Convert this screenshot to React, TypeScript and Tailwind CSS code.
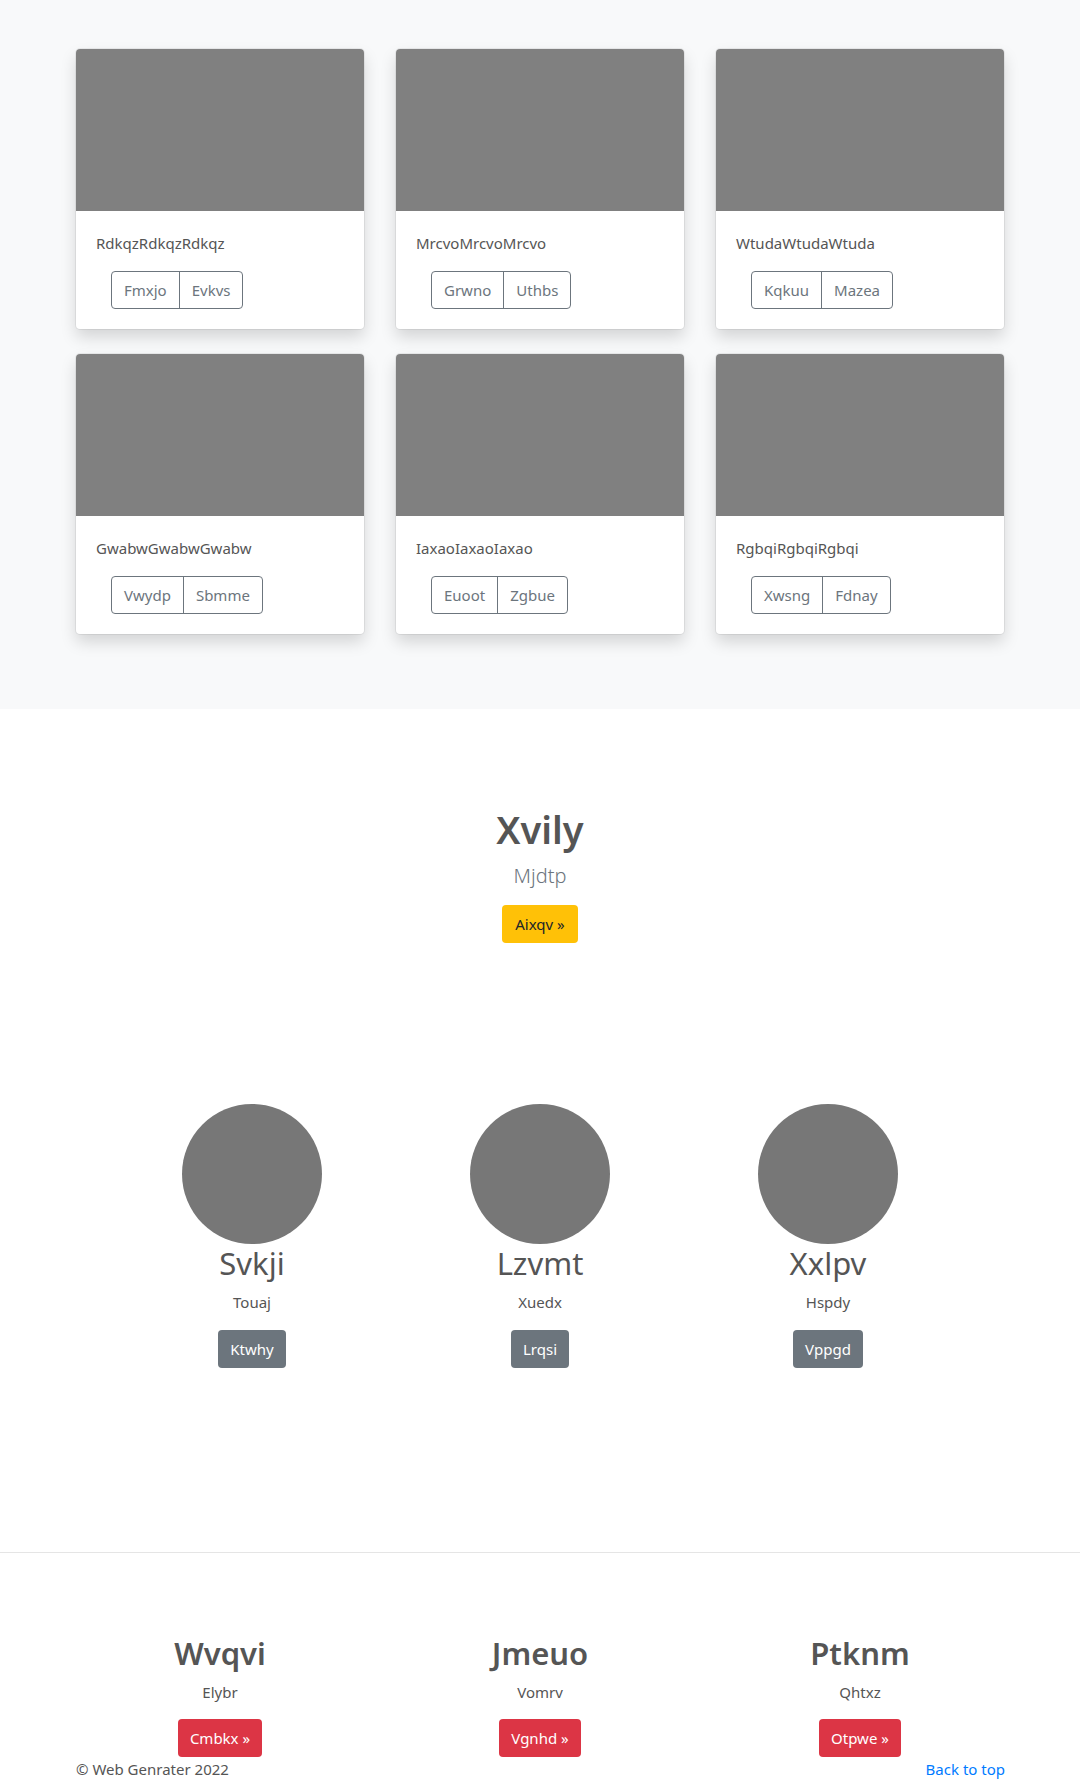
import React from 'react'

const cards = [
  { title: 'RdkqzRdkqzRdkqz', a: 'Fmxjo', b: 'Evkvs' },
  { title: 'MrcvoMrcvoMrcvo', a: 'Grwno', b: 'Uthbs' },
  { title: 'WtudaWtudaWtuda', a: 'Kqkuu', b: 'Mazea' },
  { title: 'GwabwGwabwGwabw', a: 'Vwydp', b: 'Sbmme' },
  { title: 'IaxaoIaxaoIaxao', a: 'Euoot', b: 'Zgbue' },
  { title: 'RgbqiRgbqiRgbqi', a: 'Xwsng', b: 'Fdnay' },
]

const people = [
  { name: 'Svkji', sub: 'Touaj', btn: 'Ktwhy' },
  { name: 'Lzvmt', sub: 'Xuedx', btn: 'Lrqsi' },
  { name: 'Xxlpv', sub: 'Hspdy', btn: 'Vppgd' },
]

const features = [
  { name: 'Wvqvi', sub: 'Elybr', btn: 'Cmbkx' },
  { name: 'Jmeuo', sub: 'Vomrv', btn: 'Vgnhd' },
  { name: 'Ptknm', sub: 'Qhtxz', btn: 'Otpwe' },
]

function Card({ title, a, b }: { title: string; a: string; b: string }) {
  return (
    <div className="bg-white rounded-[4px] overflow-hidden shadow-[0_0_0_1px_rgba(0,0,0,0.06),0_8px_16px_rgba(0,0,0,0.15)]">
      <div className="h-[162px] bg-[#808080]" />
      <div className="p-5">
        <p className="text-[15px] leading-6 text-[#555]">{title}</p>
        <div className="mt-4 ml-[15px] inline-flex border border-[#6c757d] rounded-[4px] text-[#6c757d] text-[15px] leading-6">
          <button className="px-3 py-[6px] border-r border-[#6c757d]">{a}</button>
          <button className="px-3 py-[6px]">{b}</button>
        </div>
      </div>
    </div>
  )
}

export default function App() {
  return (
    <div className="min-h-[1782px] bg-white text-[#555] font-['Noto_Sans','Open_Sans',sans-serif]">
      {/* album */}
      <section className="bg-[#f8f9fa] pt-[49px] pb-[75px]">
        <div className="grid grid-cols-[repeat(3,288px)] justify-center gap-x-8 gap-y-[25px]">
          {cards.map((c) => (
            <Card key={c.title} {...c} />
          ))}
        </div>
      </section>

      {/* hero */}
      <section className="pt-[96px] text-center">
        <h1 className="text-[38px] leading-[48px] font-semibold text-[#555]">Xvily</h1>
        <p className="mt-2 text-[20px] leading-[30px] font-light text-[#6c757d]">Mjdtp</p>
        <button className="mt-[14px] bg-[#ffc107] text-[#212529] rounded-[4px] px-[13px] py-[6px] text-[15px] leading-[26px]">
          Aixqv »
        </button>
      </section>

      {/* marketing */}
      <section className="pt-[161px] grid grid-cols-[repeat(3,288px)] justify-center text-center">
        {people.map((p) => (
          <div key={p.name} className="flex flex-col items-center">
            <div className="w-[140px] h-[140px] rounded-full bg-[#777]" />
            <h2 className="text-[31px] leading-[38px] font-normal text-[#555]">{p.name}</h2>
            <p className="mt-2 text-[15px] leading-6">{p.sub}</p>
            <button className="mt-4 bg-[#6c757d] text-white rounded-[4px] px-3 py-[6px] text-[15px] leading-[26px]">
              {p.btn}
            </button>
          </div>
        ))}
      </section>

      <hr className="mt-[184px] border-0 h-px bg-[#e5e5e5]" />

      {/* features */}
      <section className="pt-[81px] grid grid-cols-[repeat(3,320px)] justify-center text-center">
        {features.map((f) => (
          <div key={f.name} className="flex flex-col items-center">
            <h2 className="text-[31px] leading-[38px] font-semibold text-[#555]">{f.name}</h2>
            <p className="mt-2 text-[15px] leading-6">{f.sub}</p>
            <button className="mt-[15px] bg-[#dc3545] text-white rounded-[4px] px-3 py-[6px] text-[15px] leading-[26px]">
              {f.btn} »
            </button>
          </div>
        ))}
      </section>

      <footer className="flex justify-between pl-[76px] pr-[75px] text-[15px] leading-6">
        <span>© Web Genrater 2022</span>
        <a href="#" className="text-[#007bff]">Back to top</a>
      </footer>
    </div>
  )
}
